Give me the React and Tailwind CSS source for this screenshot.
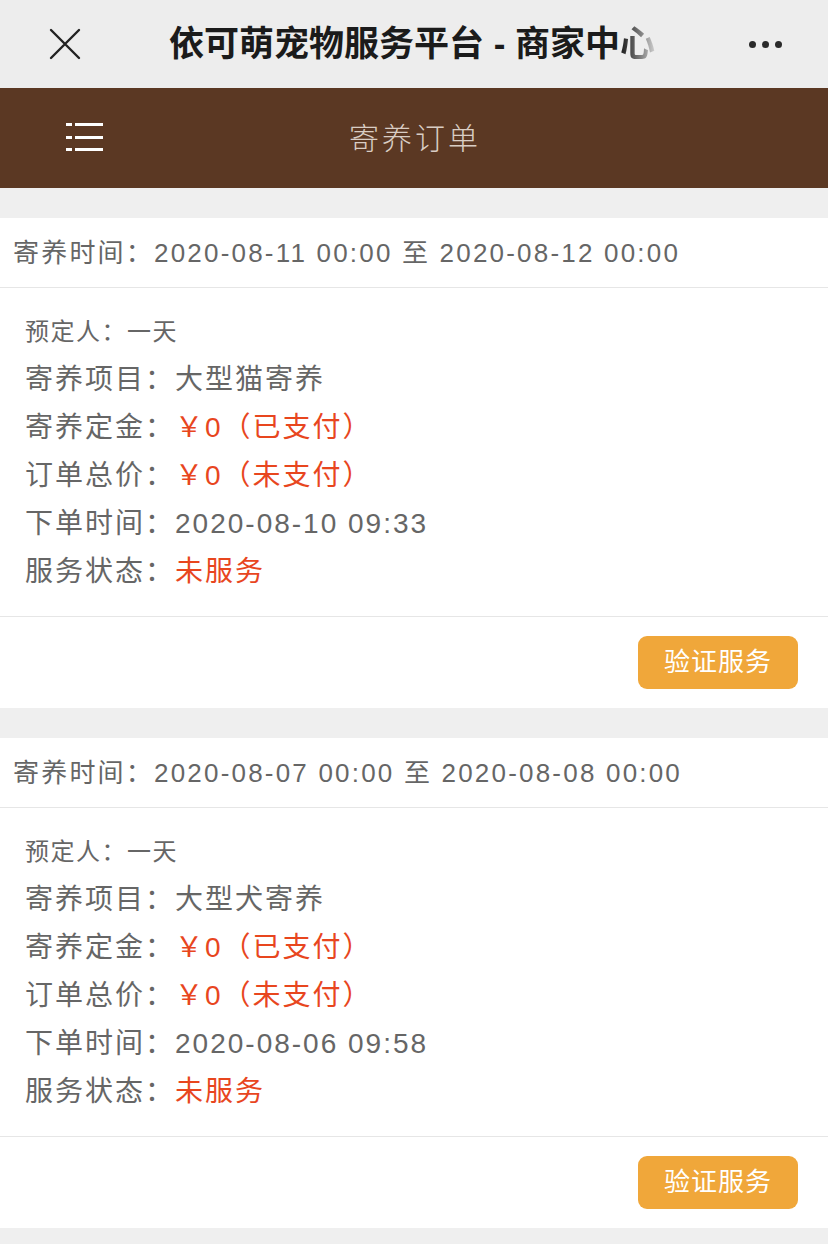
import React from 'react';

const orders = [
  {
    range: '2020-08-11 00:00 至 2020-08-12 00:00',
    item: '大型猫寄养',
    created: '2020-08-10 09:33',
  },
  {
    range: '2020-08-07 00:00 至 2020-08-08 00:00',
    item: '大型犬寄养',
    created: '2020-08-06 09:58',
  },
];

const font = { fontFamily: '"Liberation Sans", "Noto Sans CJK SC", sans-serif' };

const Row = ({ label, children, red }) => (
  <div className="h-[48px] flex items-center text-[28px] tracking-[2px]">
    <span className="text-[#666]">{label}：</span>
    <span className={red ? 'text-[#e8461e]' : 'text-[#666]'}>{children}</span>
  </div>
);

const OrderCard = ({ order }) => (
  <div className="bg-white mt-[30px]">
    <div className="h-[70px] pt-[2px] flex items-center pl-[13px] text-[26px] tracking-[2.2px] text-[#666] border-b border-[#e6e6e6]">
      寄养时间：{order.range}
    </div>
    <div className="pl-[25px] pt-[20px] pb-[20px] border-b border-[#e6e6e6]">
      <div className="h-[48px] flex items-center text-[24px] text-[#666] tracking-[1.5px]">预定人：一天</div>
      <Row label="寄养项目">{order.item}</Row>
      <Row label="寄养定金" red>￥0（已支付）</Row>
      <Row label="订单总价" red>￥0（未支付）</Row>
      <Row label="下单时间">{order.created}</Row>
      <Row label="服务状态" red>未服务</Row>
    </div>
    <div className="h-[91px] flex items-center justify-end pr-[30px]">
      <button className="w-[160px] h-[53px] rounded-[9px] bg-[#f0a73a] text-white text-[26px] tracking-[1px]">
        验证服务
      </button>
    </div>
  </div>
);

export default function App() {
  return (
    <div className="w-[828px] min-h-[1244px] bg-[#efefef]" style={font}>
      {/* top bar */}
      <div className="h-[88px] bg-[#ededed] flex items-center pl-[49px] pr-[46px]">
        <svg width="32" height="32" viewBox="0 0 32 32" className="shrink-0">
          <path d="M2 2 L30 30 M30 2 L2 30" stroke="#222" strokeWidth="2.4" strokeLinecap="round" />
        </svg>
        <div className="flex-1 text-center text-[35px] font-bold text-[#1b1b1b] pr-[6px] whitespace-nowrap">
          依可萌宠物服务平台 - 商家中
          <span className="bg-gradient-to-r from-[#1b1b1b] to-[#d0d0d0] bg-clip-text text-transparent">心</span>
        </div>
        <div className="flex gap-[6px] shrink-0">
          <span className="w-[7px] h-[7px] rounded-full bg-[#2a2a2a]" />
          <span className="w-[7px] h-[7px] rounded-full bg-[#2a2a2a]" />
          <span className="w-[7px] h-[7px] rounded-full bg-[#2a2a2a]" />
        </div>
      </div>

      {/* brown header */}
      <div className="h-[100px] bg-[#5b3823] flex items-center relative">
        <div className="absolute left-[66px] top-[35px] flex flex-col gap-[9.5px]">
          {[0, 1, 2].map((i) => (
            <div key={i} className="flex gap-[3px]">
              <span className="w-[6px] h-[3px] bg-white" />
              <span className="w-[28px] h-[3px] bg-white" />
            </div>
          ))}
        </div>
        <div className="flex-1 text-center text-[30px] font-light text-[#d9cdc4] tracking-[3px] pl-[2px]">寄养订单</div>
      </div>

      {orders.map((o, i) => (
        <OrderCard key={i} order={o} />
      ))}
    </div>
  );
}
